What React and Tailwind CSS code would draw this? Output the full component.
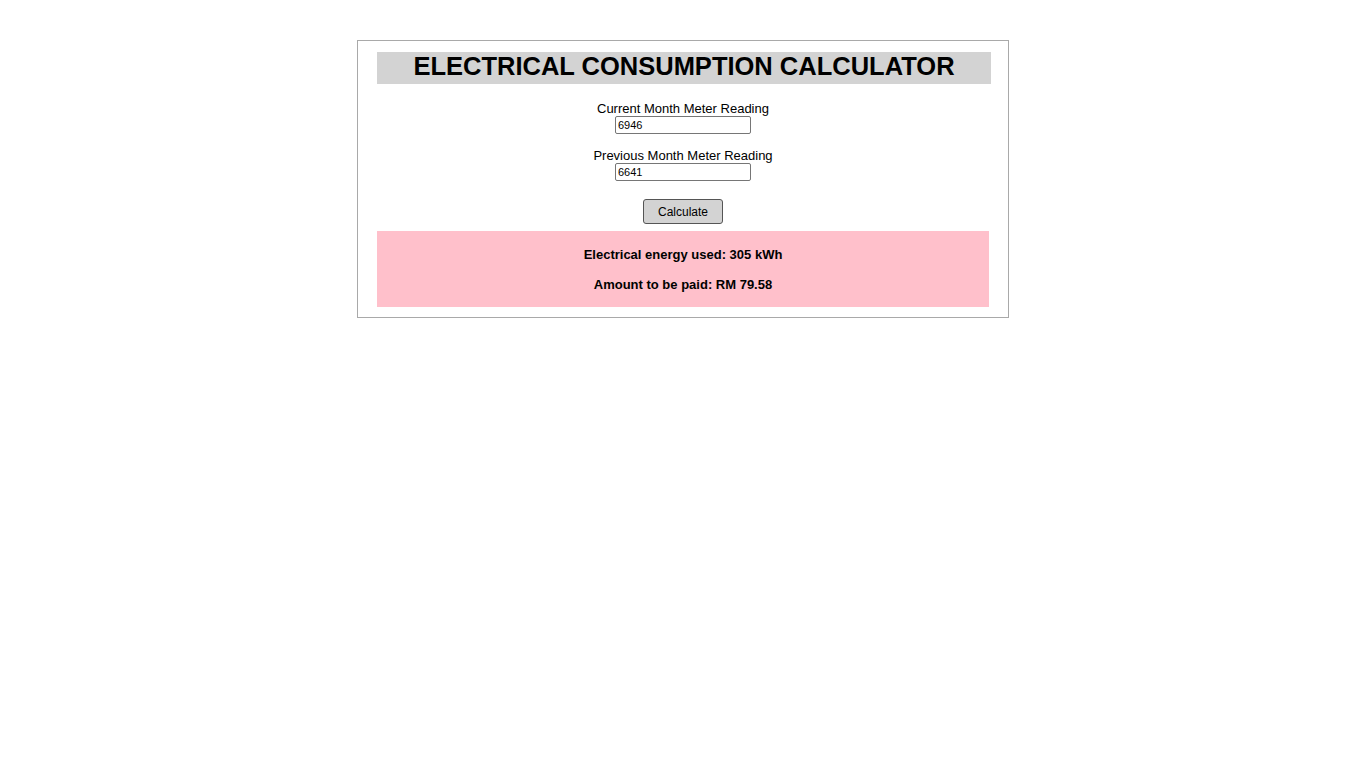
import React, { useState } from "react";

export default function App() {
  const [current, setCurrent] = useState("6946");
  const [previous, setPrevious] = useState("6641");
  const [result, setResult] = useState({ used: 305, amount: "79.58" });

  // simple tariff, first 200 kWh at 21.8 sen, next 100 at 33.4 sen, rest at 51.6 sen
  const calculate = () => {
    const used = Number(current) - Number(previous);
    let amount = 0;
    let left = used;
    const tiers = [[200, 0.218], [100, 0.334], [Infinity, 0.516]];
    for (const [size, rate] of tiers) {
      const part = Math.max(0, Math.min(left, size));
      amount += part * rate;
      left -= part;
    }
    setResult({ used, amount: amount.toFixed(2) });
  };

  return (
    <div className="min-h-screen bg-white pt-[40px]">
      <div
        className="mx-auto w-[652px] border border-[#a9a9a9] px-[18px] pt-[11px] pb-[10px] text-black"
        style={{ fontFamily: '"Liberation Sans", Arial, sans-serif' }}
      >
        <h1 className="ml-[1px] mr-[-1px] h-[32px] bg-[#d3d3d3] text-center text-[25.5px] font-bold leading-[29px]">
          ELECTRICAL CONSUMPTION CALCULATOR
        </h1>

        <div className="mt-[16px] flex flex-col items-center">
          <label className="pt-[1px] text-[13px] leading-[15px]">Current Month Meter Reading</label>
          <input
            className="h-[18px] w-[136px] rounded-[2px] border border-[#767676] px-[2px] text-[11px] leading-[14px] outline-none"
            value={current}
            onChange={(e) => setCurrent(e.target.value)}
          />
        </div>

        <div className="mt-[13px] flex flex-col items-center">
          <label className="pt-[1px] text-[13px] leading-[15px]">Previous Month Meter Reading</label>
          <input
            className="h-[18px] w-[136px] rounded-[2px] border border-[#767676] px-[2px] text-[11px] leading-[14px] outline-none"
            value={previous}
            onChange={(e) => setPrevious(e.target.value)}
          />
        </div>

        <div className="mt-[18px] flex justify-center">
          <button
            type="button"
            onClick={calculate}
            className="h-[25px] w-[80px] rounded-[3px] border border-[#555] bg-[#d3d3d3] text-[12px]"
          >
            Calculate
          </button>
        </div>

        <div className="mt-[7px] ml-[1px] mr-[1px] flex h-[76px] flex-col items-center gap-[14px] bg-[#ffc0cb] pt-[16px] text-[13px] font-bold leading-[16px]">
          <p>Electrical energy used: {result.used} kWh</p>
          <p>Amount to be paid: RM {result.amount}</p>
        </div>
      </div>
    </div>
  );
}
